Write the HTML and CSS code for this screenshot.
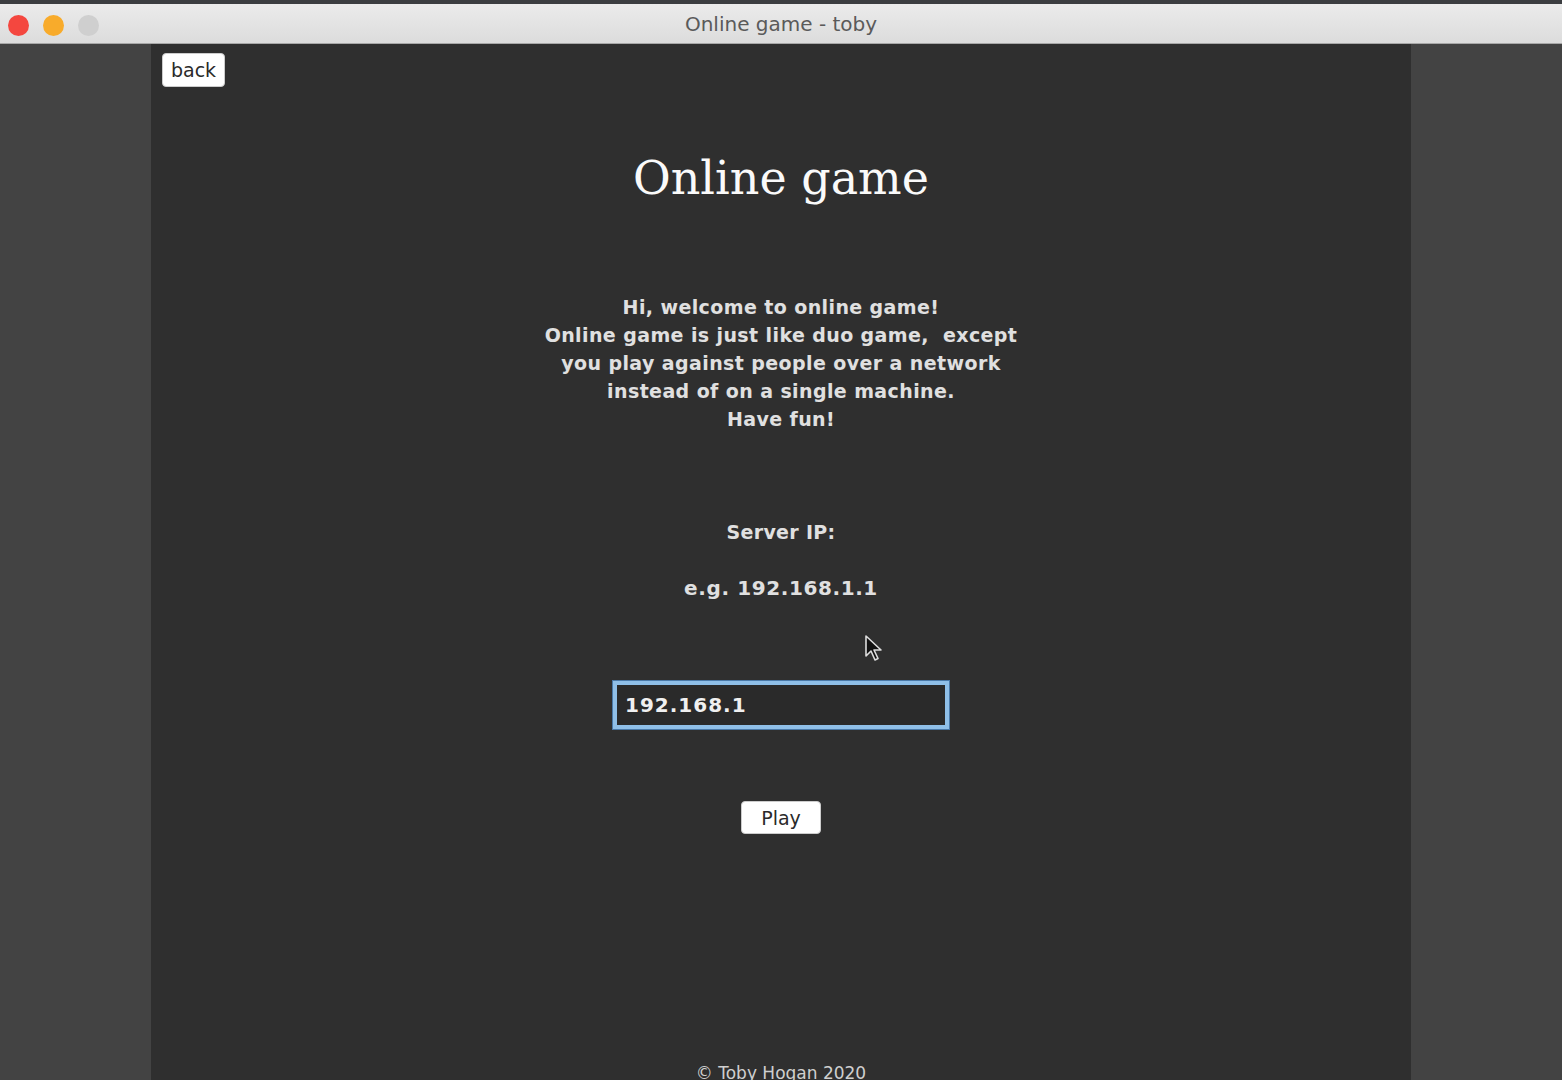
FILE: index.html
```html
<!DOCTYPE html>
<html>
<head>
<meta charset="utf-8">
<title>Online game - toby</title>
<link rel="stylesheet" href="styles.css">
</head>
<body>
<div class="topstrip"></div>
<header class="titlebar">
  <div class="lights">
    <span class="light red"></span>
    <span class="light yellow"></span>
    <span class="light grey"></span>
  </div>
  <div class="wintitle">Online game - toby</div>
</header>
<div class="window">
  <main class="panel">
    <div class="backrow"><button class="btn back">back</button></div>
    <h1 class="title">Online game</h1>
    <p class="intro">Hi, welcome to online game!<br>Online game is just like duo game,&nbsp; except<br>you play against people over a network<br>instead of on a single machine.<br>Have fun!</p>
    <p class="label">Server IP:</p>
    <p class="hint">e.g. 192.168.1.1</p>
    <div class="inputrow"><input class="ipinput" type="text" value="192.168.1"></div>
    <div class="playrow"><button class="btn play">Play</button></div>
    <footer class="footer">© Toby Hogan 2020</footer>
    <svg class="cursor" width="22" height="30" viewBox="0 0 22 30"><path d="M2 2 L2 22 L7 17 L11 26 L14 24.5 L10 16 L17 16 Z" fill="#111" stroke="#ddd" stroke-width="1.6" stroke-linejoin="round"/></svg>
  </main>
</div>
</body>
</html>
```
FILE: styles.css
```css
* { box-sizing: border-box; }
html, body { margin: 0; padding: 0; height: 100%; overflow: hidden; }
body {
  background: #434343;
  font-family: "DejaVu Sans", "Liberation Sans", Arial, sans-serif;
  display: flex;
  flex-direction: column;
}
.topstrip { height: 4px; background: #3b3d40; }
.titlebar {
  height: 40px;
  background: linear-gradient(#ebebeb, #dcdcdc);
  border-bottom: 1px solid #a8a8a8;
  position: relative;
  display: flex;
  align-items: center;
  justify-content: center;
}
.lights { position: absolute; left: 8px; top: 11px; display: flex; gap: 14px; }
.light { width: 21px; height: 21px; border-radius: 50%; display: block; }
.red { background: #f4473f; }
.yellow { background: #f8ab2b; }
.grey { background: #cfcfcf; }
.wintitle { font-size: 20px; color: #5a5a5a; }
.window { flex: 1; display: flex; justify-content: center; background: #434343; }
.panel {
  width: 1260px;
  background: #2f2f2f;
  position: relative;
  display: flex;
  flex-direction: column;
  align-items: center;
  color: #e0e0e0;
}
.backrow { align-self: flex-start; padding: 9px 0 0 11px; height: 44px; }
.btn {
  background: #fff;
  border: 1px solid #ccc;
  border-radius: 4px;
  font-family: "DejaVu Sans", "Liberation Sans", Arial, sans-serif;
  font-weight: 500;
  color: #2a2a2a;
  padding: 0;
}
.back { font-size: 19px; width: 63px; height: 34px; }
.title {
  font-family: "DejaVu Serif", Georgia, serif;
  font-weight: normal;
  font-size: 46px;
  color: #fafafa;
  margin: 60px 0 0;
  line-height: 60px;
}
.intro {
  font-size: 19px;
  font-weight: bold;
  letter-spacing: 0.4px;
  line-height: 28px;
  text-align: center;
  margin: 85px 0 0;
}
.label { font-size: 19px; font-weight: bold; letter-spacing: 0.3px; margin: 85px 0 0; line-height: 28px; }
.hint { font-size: 20px; font-weight: bold; margin: 28px 0 0; line-height: 28px; letter-spacing: 0.6px; }
.inputrow { margin-top: 79px; }
.ipinput {
  width: 336px;
  height: 48px;
  background: #2a2a2a;
  border: 4px solid #8fbfe8;
  outline: 1px solid #4a79a8;
  color: #f0f0f0;
  font-family: "DejaVu Sans", "Liberation Sans", Arial, sans-serif;
  font-weight: bold;
  font-size: 20px;
  letter-spacing: 1px;
  padding: 0 8px;
}
.playrow { margin-top: 72px; }
.play { width: 80px; height: 33px; font-size: 19px; }
.footer { margin-top: auto; font-size: 17px; color: #cfcfcf; margin-bottom: -4px; line-height: 22px; }
.cursor { position: absolute; left: 713px; top: 590px; }
```
